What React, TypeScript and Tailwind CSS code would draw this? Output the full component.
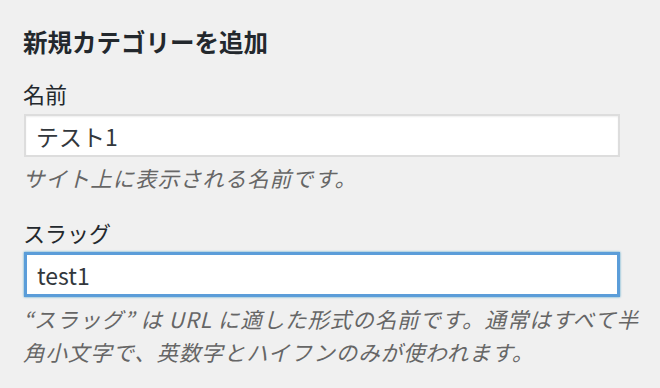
import { useState } from 'react';

const font = '"Noto Sans CJK JP", "Noto Sans", sans-serif';

export default function App() {
  const [name, setName] = useState('テスト1');
  const [slug, setSlug] = useState('test1');

  return (
    <div
      className="w-[660px] h-[388px] bg-[#f0f0f0] text-[#23282d] pl-[23px] pr-[10px] pt-[26px] overflow-hidden"
      style={{ fontFamily: font }}
    >
      <h2 className="text-[24.5px] leading-[32px] font-bold">新規カテゴリーを追加</h2>

      {/* 名前 */}
      <div className="mt-[20px]">
        <label className="block text-[22px] leading-[30px]">名前</label>
        <input
          value={name}
          onChange={(e) => setName(e.target.value)}
          className="mt-[6px] ml-px block w-[596px] h-[43px] bg-white border-2 border-[#dddddd] shadow-[inset_0_1px_2px_rgba(0,0,0,0.07)] px-[10px] text-[23px] text-[#32373c] outline-none"
          style={{ fontFamily: font }}
        />
        <p className="mt-[4px] text-[21.5px] leading-[33px] italic tracking-[0.9px] text-[#666666]">
          サイト上に表示される名前です。
        </p>
      </div>

      {/* スラッグ */}
      <div className="mt-[23px]">
        <label className="block text-[22px] leading-[30px]">スラッグ</label>
        <input
          value={slug}
          onChange={(e) => setSlug(e.target.value)}
          className="mt-[5px] ml-px block w-[596px] h-[45px] bg-white border-[3px] border-[#5b9dd9] shadow-[0_0_2px_rgba(30,140,190,0.8)] px-[10px] text-[23px] text-[#32373c] outline-none"
          style={{ fontFamily: font }}
        />
        <p className="mt-[5px] text-[21.5px] leading-[33px] italic tracking-[0.9px] text-[#666666] w-[622px]">
          “スラッグ” は URL に適した形式の名前です。通常はすべて半角小文字で、英数字とハイフンのみが使われます。
        </p>
      </div>
    </div>
  );
}
